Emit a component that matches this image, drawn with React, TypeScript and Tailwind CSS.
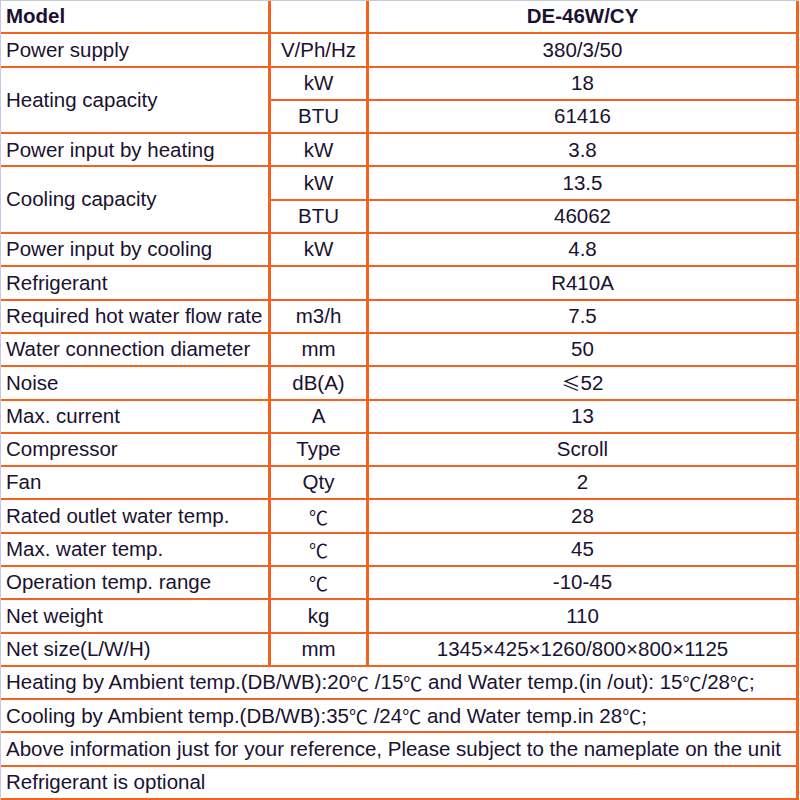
type Cell = { text: string; span?: string; align?: 'left' | 'center'; bold?: boolean };

const cells: Cell[] = [
  { text: 'Model', bold: true },
  { text: '' },
  { text: 'DE-46W/CY', bold: true, align: 'center' },
  { text: 'Power supply' },
  { text: 'V/Ph/Hz', align: 'center' },
  { text: '380/3/50', align: 'center' },
  { text: 'Heating capacity', span: 'row-span-2' },
  { text: 'kW', align: 'center' },
  { text: '18', align: 'center' },
  { text: 'BTU', align: 'center' },
  { text: '61416', align: 'center' },
  { text: 'Power input by heating' },
  { text: 'kW', align: 'center' },
  { text: '3.8', align: 'center' },
  { text: 'Cooling capacity', span: 'row-span-2' },
  { text: 'kW', align: 'center' },
  { text: '13.5', align: 'center' },
  { text: 'BTU', align: 'center' },
  { text: '46062', align: 'center' },
  { text: 'Power input by cooling' },
  { text: 'kW', align: 'center' },
  { text: '4.8', align: 'center' },
  { text: 'Refrigerant' },
  { text: '' },
  { text: 'R410A', align: 'center' },
  { text: 'Required hot water flow rate' },
  { text: 'm3/h', align: 'center' },
  { text: '7.5', align: 'center' },
  { text: 'Water connection diameter' },
  { text: 'mm', align: 'center' },
  { text: '50', align: 'center' },
  { text: 'Noise' },
  { text: 'dB(A)', align: 'center' },
  { text: '≤52', align: 'center' },
  { text: 'Max. current' },
  { text: 'A', align: 'center' },
  { text: '13', align: 'center' },
  { text: 'Compressor' },
  { text: 'Type', align: 'center' },
  { text: 'Scroll', align: 'center' },
  { text: 'Fan' },
  { text: 'Qty', align: 'center' },
  { text: '2', align: 'center' },
  { text: 'Rated outlet water temp.' },
  { text: '℃', align: 'center' },
  { text: '28', align: 'center' },
  { text: 'Max. water temp.' },
  { text: '℃', align: 'center' },
  { text: '45', align: 'center' },
  { text: 'Operation temp. range' },
  { text: '℃', align: 'center' },
  { text: '-10-45', align: 'center' },
  { text: 'Net weight' },
  { text: 'kg', align: 'center' },
  { text: '110', align: 'center' },
  { text: 'Net size(L/W/H)' },
  { text: 'mm', align: 'center' },
  { text: '1345×425×1260/800×800×1125', align: 'center' },
  {
    text: 'Heating by Ambient temp.(DB/WB):20℃ /15℃ and Water temp.(in /out): 15℃/28℃;',
    span: 'col-span-3',
  },
  { text: 'Cooling by Ambient temp.(DB/WB):35℃ /24℃ and Water temp.in 28℃;', span: 'col-span-3' },
  {
    text: 'Above information just for your reference, Please subject to the nameplate on the unit',
    span: 'col-span-3',
  },
  { text: 'Refrigerant is optional', span: 'col-span-3' },
];

// ℃ and ≤ come from the CJK face, like the original sheet
function Txt({ text }: { text: string }) {
  return (
    <>
      {text.split(/([℃≤])/).map((part, i) =>
        part === '℃' || part === '≤' ? (
          <span key={i} className="font-['Noto_Sans_CJK_SC',sans-serif] text-[19px]">
            {part}
          </span>
        ) : (
          part
        ),
      )}
    </>
  );
}

export default function App() {
  return (
    <div className="h-[800px] w-[800px] bg-white">
      <div className="grid h-[800px] w-[799px] grid-cols-[270px_98px_1fr] grid-rows-[repeat(24,1fr)] border-l border-t border-l-[#c9c6e4] border-t-[#c3c9d6] font-['Liberation_Sans',Arial,sans-serif] text-[20.5px] leading-none text-[#1b1230]">
        {cells.map((c, i) => (
          <div
            key={i}
            className={`flex items-center whitespace-pre border-b-2 border-r-[3px] border-[#f5621f] ${
              c.align === 'center' ? 'justify-center' : 'pl-[5px]'
            } ${c.bold ? 'font-bold' : ''} ${c.span ?? ''}`}
          >
            <Txt text={c.text} />
          </div>
        ))}
      </div>
    </div>
  );
}
